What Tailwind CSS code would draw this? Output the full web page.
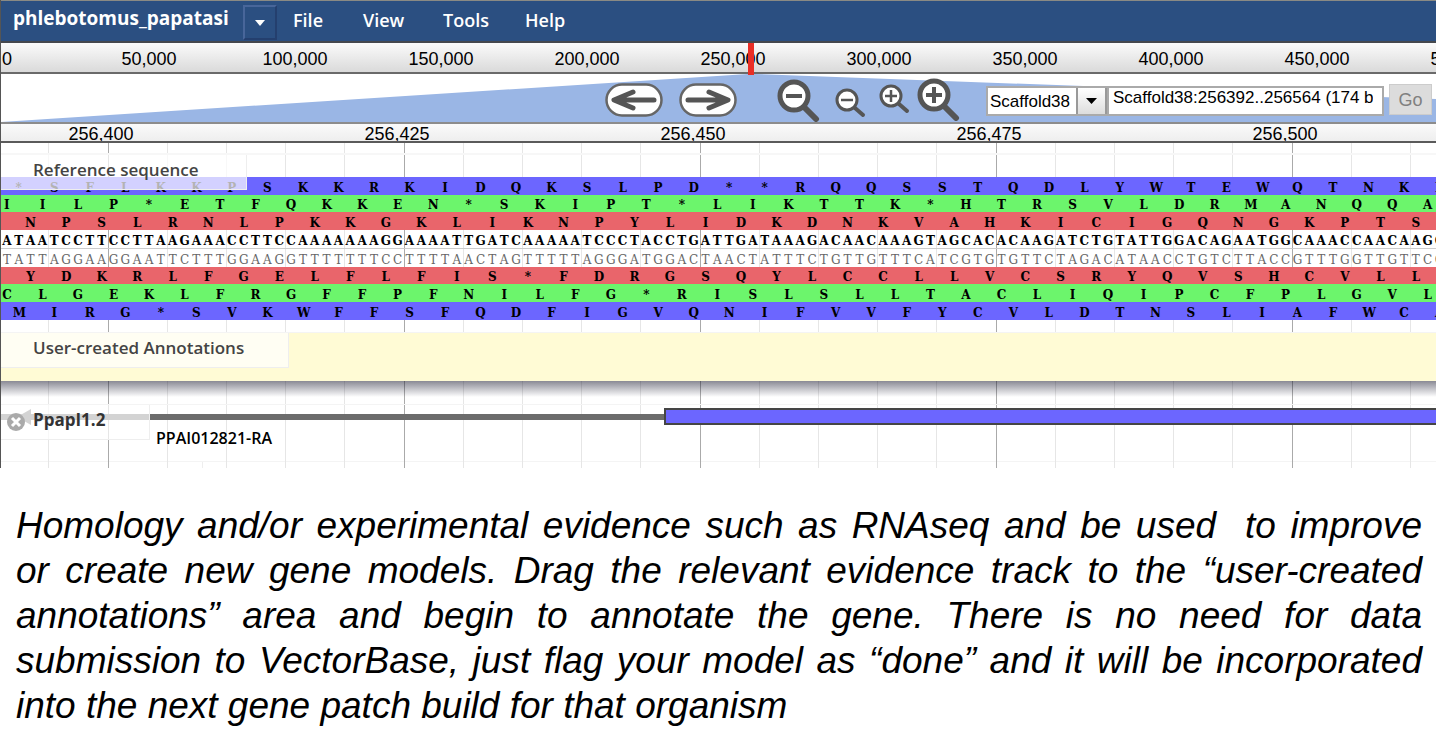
<!DOCTYPE html>
<html lang="en">
<head>
<meta charset="utf-8">
<title>phlebotomus_papatasi</title>
<script src="https://cdn.jsdelivr.net/npm/@tailwindcss/browser@4"></script>
</head>
<body class="bg-white font-['Liberation_Sans',Arial,sans-serif] text-black">
<div class="mr-px overflow-hidden border-l border-[#555]">
  <header class="flex h-[43px] items-start border-t border-b-2 border-t-[#8a8a84] border-b-[#45484e] bg-[#2b4f81] pl-3 font-['Open_Sans',sans-serif] text-lg font-semibold text-white">
    <h1 class="w-[230px] pt-[3px] text-[19px] leading-7 font-bold">phlebotomus_papatasi</h1>
    <button aria-label="Choose organism" class="mt-1 flex h-[35px] w-[34px] items-center justify-center border-2 border-t-[#48669a] border-r-[#243f6e] border-b-[#243f6e] border-l-[#48669a]">
      <svg class="h-[6px] w-[10px]" viewBox="0 0 10 6" fill="white"><path d="M0 0H10L5 6Z"/></svg>
    </button>
    <nav class="flex pt-[5px] pl-4 leading-7">
      <button class="w-[70px] text-left">File</button>
      <button class="w-20 text-left">View</button>
      <button class="w-[82px] text-left">Tools</button>
      <button class="text-left">Help</button>
    </nav>
  </header>

  <div class="relative flex h-[31px] border-b-2 border-[#6a6a6a] bg-linear-to-b from-[#fbfbfb] to-[#dadada] text-lg leading-8 whitespace-nowrap">
    <span class="w-[75px] shrink-0 pl-px">0</span>
    <span class="w-[146px] shrink-0 text-center">50,000</span>
    <span class="w-[146px] shrink-0 text-center">100,000</span>
    <span class="w-[146px] shrink-0 text-center">150,000</span>
    <span class="w-[146px] shrink-0 text-center">200,000</span>
    <span class="w-[146px] shrink-0 text-center">250,000</span>
    <span class="w-[146px] shrink-0 text-center">300,000</span>
    <span class="w-[146px] shrink-0 text-center">350,000</span>
    <span class="w-[146px] shrink-0 text-center">400,000</span>
    <span class="w-[146px] shrink-0 text-center">450,000</span>
    <span class="w-[146px] shrink-0 text-center">500,000</span>
    <div class="absolute top-0 left-[747px] z-10 h-8 w-[6px] bg-[#e92e25]"></div>
  </div>

  <div class="relative h-12">
    <svg class="absolute inset-0 h-full w-full" viewBox="0 0 1435 48" preserveAspectRatio="none"><path d="M0 48L747 0H753L1435 25V48Z" fill="#9ab6e5"/></svg>
    <div class="relative flex h-full items-start justify-end pr-1 text-[#555]">
      <button aria-label="Move left" class="mt-[9px] mr-4"><svg class="h-[34px] w-[58px]" viewBox="0 0 58 34" fill="none" stroke="currentColor"><rect x="1.5" y="1.5" width="55" height="31" rx="15.5" fill="white" stroke="#666" stroke-width="2.500"/><path d="M49 17H11M28 9L9 17L28 25" stroke-width="5" stroke-linecap="round" stroke-linejoin="round"/></svg></button>
      <button aria-label="Move right" class="mt-[9px] mr-10"><svg class="h-[34px] w-[58px]" viewBox="0 0 58 34" fill="none" stroke="currentColor"><rect x="1.5" y="1.5" width="55" height="31" rx="15.5" fill="white" stroke="#666" stroke-width="2.500"/><path d="M9 17H47M30 9L49 17L30 25" stroke-width="5" stroke-linecap="round" stroke-linejoin="round"/></svg></button>
      <button aria-label="Zoom out far" class="mt-[5px] mr-[15px]"><svg class="h-[43px] w-[43px]" viewBox="0 0 43 43" fill="none" stroke="currentColor"><path d="M28 29L39 40" stroke-width="6" stroke-linecap="round"/><circle cx="17" cy="17" r="14" fill="white" stroke-width="5"/><path d="M9 17H25" stroke-width="4"/></svg></button>
      <button aria-label="Zoom out" class="mt-[14px] mr-[13px]"><svg class="h-[30px] w-[31px]" viewBox="0 0 31 30" fill="none" stroke="currentColor"><path d="M20 20L28 27" stroke-width="4" stroke-linecap="round"/><circle cx="12" cy="12" r="10" fill="white" stroke-width="3"/><path d="M6 12H18" stroke-width="2.500"/></svg></button>
      <button aria-label="Zoom in" class="mt-[10px] mr-[7px]"><svg class="h-[30px] w-[31px]" viewBox="0 0 31 30" fill="none" stroke="currentColor"><path d="M20 20L28 27" stroke-width="4" stroke-linecap="round"/><circle cx="12" cy="12" r="10" fill="white" stroke-width="3"/><path d="M6 12H18M12 6V18" stroke-width="2.500"/></svg></button>
      <button aria-label="Zoom in far" class="mt-[4px] mr-[26px]"><svg class="h-[43px] w-[43px]" viewBox="0 0 43 43" fill="none" stroke="currentColor"><path d="M28 29L39 40" stroke-width="6" stroke-linecap="round"/><circle cx="17" cy="17" r="14" fill="white" stroke-width="5"/><path d="M9 17H25M17 9V25" stroke-width="4"/></svg></button>
      <div class="relative mt-3 h-[30px] w-[121px]">
        <select aria-label="Reference sequence name" class="h-full w-full appearance-none border-2 border-[#aaa] bg-white pl-[2px] text-[17px] leading-none text-black"><option>Scaffold38</option></select>
        <span class="pointer-events-none absolute top-[2px] right-0 bottom-[2px] flex w-[31px] items-center justify-center border-x-2 border-[#999] bg-linear-to-b from-white to-[#ddd]"><svg class="h-[6px] w-[11px]" viewBox="0 0 11 6"><path d="M0 0H11L5.500 6Z" fill="black"/></svg></span>
      </div>
      <input aria-label="Location" value="Scaffold38:256392..256564 (174 bp)" class="mt-3 h-[30px] w-[277px] border-2 border-[#aaa] bg-white pr-[9px] pb-[6px] pl-1 text-[17px] leading-none text-black">
      <button class="mt-[10px] ml-[5px] h-[31px] w-[43px] border border-[#ccc] bg-[#dcdcdc] text-lg leading-none text-[#808080]">Go</button>
    </div>
  </div>

  <div class="h-[21px] overflow-hidden border-t-2 border-b-2 border-t-[#8c8c8c] border-b-[#5a5a5a] bg-linear-to-b from-[#fafafa] to-[#eee] text-lg leading-5">
    <div class="-ml-12 flex">
      <span class="w-[296px] shrink-0 text-center">256,400</span>
      <span class="w-[296px] shrink-0 text-center">256,425</span>
      <span class="w-[296px] shrink-0 text-center">256,450</span>
      <span class="w-[296px] shrink-0 text-center">256,475</span>
      <span class="w-[296px] shrink-0 text-center">256,500</span>
    </div>
  </div>

  <main class="relative overflow-hidden pt-[10px] font-['Open_Sans',sans-serif] text-[17px]">
    <div id="gridlines" class="absolute inset-y-0 left-0 grid w-[1480px] grid-cols-[repeat(125,minmax(0,1fr))]"></div>

    <section class="relative border-t-2 border-[#f7f7f7] pt-[22px] pb-3">
      <div id="sequence" class="font-['DejaVu_Serif',serif] text-xs font-bold"></div>
      <h2 class="absolute top-0 left-0 h-[35px] w-[246px] border-r border-b border-[#eee] bg-white/70 pl-8 leading-[30px] font-semibold text-[#444]">Reference sequence</h2>
    </section>

    <section class="relative h-[49px] border-t border-[#f4f4f4] bg-[#fffbd5]">
      <h2 class="h-[35px] w-[288px] border-r border-b border-[#eee] bg-white/70 pl-8 leading-[30px] font-semibold text-[#444]">User-created Annotations</h2>
      <div class="absolute inset-x-0 top-full h-4 bg-linear-to-b from-[#14142a]/50 to-transparent"></div>
    </section>

    <section class="relative mt-[23px] h-[57px] border-t border-[#f4f4f4] pt-[3px]">
      <div class="flex h-[17px] items-center">
        <div class="h-[6px] w-[663px] shrink-0 bg-[#6c6c6c]"></div>
        <div class="h-full grow border-2 border-r-0 border-[#454545] bg-[#6c66ff]"></div>
      </div>
      <p class="pl-[155px] text-base leading-[26px] font-semibold">PPAI012821-RA</p>
      <svg class="absolute top-1 left-4 h-4 w-[14px]" viewBox="0 0 14 16"><path d="M14 0V16L0 8Z" fill="#6c6c6c"/></svg>
      <div class="absolute top-0 left-0 flex h-[35px] w-[149px] items-center border-r border-b border-[#eee] bg-white/70">
        <button aria-label="Close track" class="ml-[6px]"><svg class="h-[18px] w-[18px]" viewBox="0 0 18 18"><circle cx="9" cy="9" r="9" fill="#aaa"/><path d="M5 5L13 13M13 5L5 13" stroke="white" stroke-width="3"/></svg></button>
        <h2 class="pb-1 pl-2 font-bold text-[#333]">PpapI1.2</h2>
      </div>
    </section>

    <section class="h-[7px] border-t border-[#f4f4f4]"><div class="h-full w-[202px] border-r border-[#eee] bg-white/70"></div></section>
  </main>
</div>

<p class="px-4 pt-[35px] pr-[15px] text-justify text-[37px] leading-[45px] italic"><span class="block [text-align-last:justify]">Homology and/or experimental evidence such as RNAseq and be used&nbsp; to improve</span> or create new gene models. Drag the relevant evidence track to the “user-created annotations” area and begin to annotate the gene. There is no need for data submission to VectorBase, just flag your model as “done” and it will be incorporated into the next gene patch build for that organism</p>

<script>
const bases = "ATAATCCTTCCTTAAGAAACCTTCCAAAAAAAGGAAAATTGATCAAAAATCCCTACCTGATTGATAAAGACAACAAAGTAGCACACAAGATCTGTATTGGACAGAATGGCAAACCAACAAGC";
const pair = {A: "T", T: "A", C: "G", G: "C"};
const complement = [...bases].map(b => pair[b]).join("");
const row = "grid w-[1480px] grid-cols-[repeat(125,minmax(0,1fr))] items-end text-center leading-[14px]";
const rows = [
  ["*SFLKKPSKKRKIDQKSLPD**RQQSSTQDLYWTEWQTNKP", 1, 3, "h-[18px] bg-[#6c66ff]"],
  ["IILP*ETFQKKEN*SKIPT*LIKTTK*HTRSVLDRMANQQA", 0, 3, "h-[17px] bg-[#6cf56c]"],
  ["NPSLRNLPKKGKLIKNPYLIDKDNKVAHKICIGQNGKPTS", 2, 3, "h-[18px] bg-[#e9656b]"],
  [bases, 0, 1, "h-[19px] border-b border-[#ccc]"],
  [complement, 0, 1, "h-[18px] font-medium text-[#666]"],
  ["YDKRLFGELFLFIS*FDRGSQYLCCLLVCSRYQVSHCVLL", 2, 3, "h-[17px] bg-[#e9656b]"],
  ["CLGEKLFRGFFPFNILFG*RISLSLLTACLIQIPCFPLGVL", 0, 3, "h-[18px] bg-[#6cf56c]"],
  ["MIRG*SVKWFFSFQDFIGVQNIFVVFYCVLDTNSLIAFWCA", 1, 3, "h-[18px] bg-[#6c66ff]"],
];
document.getElementById("sequence").innerHTML = rows.map(([letters, start, step, look]) =>
  `<div class="${row} ${look}">` + [...letters].map((c, i) => `<span style="grid-area:1/${start + i * step + 1}">${c}</span>`).join("") + "</div>").join("");
let lines = "";
for (let b = 4; b < 125; b += 5) {
  lines += `<div class="border-l ${b % 25 === 9 ? "border-[#aaa]" : "border-[#e6e6e6]"}" style="grid-area:1/${b + 1}"></div>`;
}
document.getElementById("gridlines").innerHTML = lines;
</script>
</body>
</html>
